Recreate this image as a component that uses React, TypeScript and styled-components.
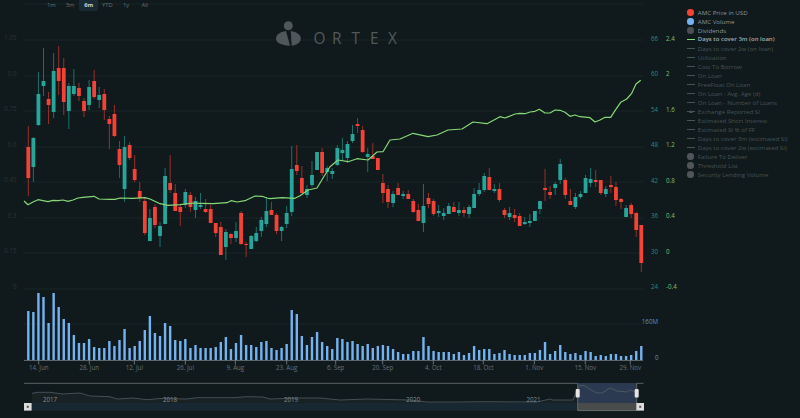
import styled, { createGlobalStyle } from 'styled-components'

const GlobalStyle = createGlobalStyle`
  html, body {
    margin: 0;
    padding: 0;
    background: #10191c;
    overflow: hidden;
  }
`

const Page = styled.div`
  display: flex;
  width: 800px;
  height: 418px;
  background: #10191c;
  font-family: 'Open Sans', 'Liberation Sans', sans-serif;
  overflow: hidden;
`

const ChartArea = styled.div`
  position: relative;
  flex: 0 0 686px;
  height: 418px;
`

const Chart = styled.svg`
  display: block;
  width: 686px;
  height: 418px;
  font-family: 'Open Sans', 'Liberation Sans', sans-serif;
`

// zoom buttons float over the top of the chart
const RangeBar = styled.div`
  position: absolute;
  top: 0;
  left: 42px;
  display: flex;
`

const RangeButton = styled.div<{ $active?: boolean }>`
  width: 18.7px;
  height: 11px;
  line-height: 11px;
  text-align: center;
  font-size: 5.8px;
  font-weight: ${p => (p.$active ? 700 : 400)};
  color: ${p => (p.$active ? '#c9d2d4' : '#667377')};
  background: ${p => (p.$active ? '#1a2a35' : 'transparent')};
  border-radius: 0 0 2px 2px;
`

const Legend = styled.div`
  display: flex;
  flex-direction: column;
  padding-top: 8px;
`

const LegendRow = styled.div`
  display: flex;
  align-items: center;
  height: 9.03px;
  gap: 2.4px;
`

const MarkerSlot = styled.div`
  position: relative;
  flex: 0 0 9.4px;
  height: 9px;
  display: flex;
  align-items: center;
  justify-content: center;
`

const Dot = styled.span<{ $color: string }>`
  width: 6.6px;
  height: 6.6px;
  border-radius: 50%;
  background: ${p => p.$color};
`

const Dash = styled.span<{ $color: string }>`
  width: 8.4px;
  height: 1.3px;
  background: ${p => p.$color};
`

const Triangle = styled.span`
  position: absolute;
  left: 2.6px;
  top: 2.6px;
  width: 0;
  height: 0;
  border-left: 2px solid transparent;
  border-right: 2px solid transparent;
  border-bottom: 3.4px solid #465355;
`

const LegendLabel = styled.span<{ $tone: 'on' | 'bold' | 'off' }>`
  font-size: ${p => (p.$tone === 'bold' ? '6px' : '6.15px')};
  line-height: 9px;
  white-space: nowrap;
  font-weight: ${p => (p.$tone === 'bold' ? 600 : 400)};
  color: ${p => (p.$tone === 'off' ? '#465355' : p.$tone === 'bold' ? '#a3aeaf' : '#8b9799')};
`

const GridLine = styled.line`
  stroke: #1a282b;
  stroke-width: 0.8;
`

const AxisLine = styled.line`
  stroke: #7b8790;
  stroke-width: 0.8;
`

const Wick = styled.line<{ $up: boolean }>`
  stroke: ${p => (p.$up ? '#1c7d76' : '#a8332c')};
  stroke-width: 0.9;
`

const Body = styled.rect<{ $up: boolean }>`
  fill: ${p => (p.$up ? '#26a69a' : '#f44336')};
`

const VolumeBar = styled.rect`
  fill: #74b3f0;
`

const DtcLine = styled.polyline`
  fill: none;
  stroke: #86d977;
  stroke-width: 1.2;
  stroke-linejoin: round;
`

const AxisText = styled.text<{ $color: string }>`
  font-size: 6.2px;
  fill: ${p => p.$color};
  dominant-baseline: central;
`

const LogoText = styled.text`
  font-family: 'Open Sans', 'Liberation Sans', sans-serif;
  font-size: 15.4px;
  font-weight: 400;
  fill: #51595c;
`

// [wick top, body top, body bottom, wick bottom], 1 = green candle
type Candle = [number, number, number, number, 0 | 1]
const candles: Candle[] = [
  [126,147,178,196,0],[137,138,167,182,1],[72,94,125,126,1],[48,81,86,96,1],[92,99,105,124,0],[53,71,112,118,1],
  [46,68,81,95,0],[58,68,102,115,0],[83,86,111,129,1],[69,86,94,96,1],[83,88,96,101,0],[98,101,111,117,0],
  [80,87,105,110,1],[70,81,97,99,0],[87,95,100,108,1],[89,94,110,120,0],[116,119,124,149,0],[105,114,136,137,0],
  [141,149,165,178,0],[136,147,189,202,1],[142,145,158,160,0],[155,169,180,182,0],[182,191,198,202,0],[198,201,233,235,0],
  [209,218,241,241,1],[204,207,225,228,0],[222,226,236,247,1],[168,176,224,224,1],[155,183,190,193,0],[184,193,211,211,0],
  [204,207,212,226,0],[189,192,205,208,1],[192,195,207,212,0],[197,201,210,218,1],[193,205,207,209,1],[199,209,212,213,0],
  [205,209,223,223,0],[223,223,233,237,0],[222,227,255,255,0],[229,232,247,260,1],[233,234,238,244,0],[222,231,238,242,1],
  [211,213,244,245,0],[242,244,245,257,0],[235,236,249,249,1],[227,233,241,242,1],[217,220,231,237,1],[197,211,224,227,1],
  [202,210,215,215,0],[213,215,231,234,0],[226,227,231,241,1],[206,213,224,228,1],[146,169,212,216,1],[145,165,171,175,0],
  [166,178,193,193,0],[185,189,195,198,1],[161,175,185,187,1],[152,152,170,170,1],[148,152,173,176,0],[166,168,172,181,1],
  [168,171,174,179,1],[145,148,165,166,1],[138,150,153,161,1],[141,144,158,163,1],[125,134,141,143,1],[118,124,126,133,0],
  [126,130,152,153,0],[148,154,157,172,1],[143,156,159,159,0],[158,158,170,170,0],[174,183,193,203,0],[185,189,202,208,0],
  [191,194,203,207,1],[183,188,195,195,0],[191,194,196,199,1],[190,194,199,199,0],[199,201,212,213,0],[204,210,221,221,0],
  [184,206,223,232,1],[193,198,204,208,0],[199,201,214,216,0],[205,211,213,217,1],[208,213,216,220,1],[203,206,214,214,1],
  [202,207,212,212,0],[202,210,213,216,1],[207,210,213,217,0],[205,207,214,218,1],[188,194,208,208,1],[183,190,194,196,1],
  [173,176,190,192,1],[168,177,190,190,0],[184,189,191,193,1],[183,189,200,202,0],[208,210,215,218,0],[207,213,217,220,1],
  [209,215,218,222,0],[213,216,226,226,0],[217,222,224,225,1],[214,221,223,227,1],[211,211,221,221,1],[201,201,209,214,1],
  [169,188,190,201,0],[186,192,195,199,0],[182,184,188,195,1],[159,164,180,184,1],[178,180,195,199,0],[189,201,205,205,0],
  [193,197,207,209,1],[191,194,197,199,1],[175,178,193,193,1],[168,179,183,187,1],[170,180,182,187,0],[180,180,193,195,0],
  [186,189,194,197,1],[176,185,187,193,0],[182,187,200,206,0],[198,199,202,209,0],[205,208,217,217,1],[203,205,214,218,0],
  [212,213,230,237,0],[225,225,263,272,0],
]

const volumes = [
  311,312,293,297,323,293,307,319,323,335,343,343,339,347,348,348,341,346,340,329,348,346,341,330,316,333,336,323,326,340,
  341,339,348,345,348,348,348,347,342,337,349,343,335,345,345,347,342,341,348,350,348,344,310,314,336,345,337,332,342,346,
  349,338,339,342,341,344,346,344,348,346,345,346,349,352,354,354,351,351,337,346,351,352,352,352,354,352,355,353,346,350,
  349,349,354,353,350,354,355,355,355,353,353,350,342,354,351,345,352,354,353,355,351,352,356,355,356,354,354,356,356,355,
  351,346,
]

const dtc = [
  [24,201],[28,204.7],[33,202],[38,199.7],[43,200.7],[48,201.7],[53,200.3],[58,200.7],[63,200],[68,201.3],[73,200],[78,198],
  [83,197.3],[94,196.3],[99,199],[110,199.3],[115,199.3],[120,198],[133,198.3],[145,197.7],[150,199],[160,203.7],[168,205.3],
  [180,204.7],[193,203],[200,203.3],[213,203.7],[227,202.7],[231,200.7],[237,202],[245,200.7],[255,196],[262,196.3],[267,198],
  [270,198.7],[282,197.7],[295,198.3],[300,195.7],[308,190],[317,188],[323,178],[330,166.7],[338,160],[348,161.7],[357,158.7],
  [368,160],[377,152],[383,151.7],[390,140],[400,139],[413,133.3],[428,136.7],[437,135],[448,130],[462,129],[473,122],
  [487,123.7],[500,116.7],[505,118],[515,114],[520,113.3],[525,113.7],[530,112],[535,111.3],[539.3,109.3],[545,113],[550,113],
  [555,110],[560,110.3],[565,112.3],[570,116.3],[575,115],[580,116.7],[590,117.7],[595,122],[600,120],[605,117.3],[610.7,117.3],
  [615,110.7],[620.7,102.3],[626.7,99],[631.7,93.3],[636,84],[640.7,80.3],
]

const navigator = [
  [32,393.3],[38,392.3],[50,392.3],[63,394],[80,393],[90,396],[110,396.7],[117,399],[133,398],[147,399.7],[160,398.5],[187,399],
  [197,397.7],[233,397.7],[247,396.7],[263,397],[270,399],[297,398],[320,398],[340,400],[367,399],[410,400],[427,402],[453,402],
  [483,401.7],[537,402],[550,399],[553,400],[573,400],[577,390],[580,385],[585,386],[591,390],[597,393],[602,393],[610,388],
  [617,391],[627,392],[630,390],[633,391],[637,392],
]

const grid = [4, 40, 76, 111, 147, 182, 218, 253, 289, 324]
const leftAxis = [['1.05', 37], ['0.9', 73], ['0.75', 108], ['0.6', 144], ['0.45', 179], ['0.3', 215], ['0.15', 250], ['0', 286]] as const
const rightAxis = [['66', '2.4', 38], ['60', '2', 73], ['54', '1.6', 109], ['48', '1.2', 144], ['42', '0.8', 180], ['36', '0.4', 215], ['30', '0', 251], ['24', '-0.4', 286]] as const
const dates = [['14. Jun', 38.7], ['28. Jun', 89.3], ['12. Jul', 134.3], ['26. Jul', 185.3], ['9. Aug', 235.3], ['23. Aug', 286.7], ['6. Sep', 335.7], ['20. Sep', 382.7], ['4. Oct', 433.3], ['18. Oct', 483.3], ['1. Nov', 534.3], ['15. Nov', 585.3], ['29. Nov', 630.3]] as const
const years = [['2017', 50], ['2018', 170], ['2019', 291], ['2020', 413.3], ['2021', 533.5]] as const

type Marker = 'dot' | 'dash' | 'tri'
const legend: { label: string; marker: Marker; color: string; tone: 'on' | 'bold' | 'off' }[] = [
  { label: 'AMC Price in USD', marker: 'dot', color: '#f44336', tone: 'on' },
  { label: 'AMC Volume', marker: 'dot', color: '#74b3f0', tone: 'on' },
  { label: 'Dividends', marker: 'dot', color: '#4a4f52', tone: 'on' },
  { label: 'Days to cover 3m (on loan)', marker: 'dash', color: '#86d977', tone: 'bold' },
  { label: 'Days to cover 2w (on loan)', marker: 'dash', color: '#465355', tone: 'off' },
  { label: 'Utilization', marker: 'dash', color: '#465355', tone: 'off' },
  { label: 'Cost To Borrow', marker: 'dash', color: '#465355', tone: 'off' },
  { label: 'On Loan', marker: 'dash', color: '#465355', tone: 'off' },
  { label: 'FreeFloat On Loan', marker: 'dash', color: '#465355', tone: 'off' },
  { label: 'On Loan - Avg. Age (d)', marker: 'dash', color: '#465355', tone: 'off' },
  { label: 'On Loan - Number of Loans', marker: 'dash', color: '#465355', tone: 'off' },
  { label: 'Exchange Reported SI', marker: 'tri', color: '#465355', tone: 'off' },
  { label: 'Estimated Short Interest', marker: 'dash', color: '#465355', tone: 'off' },
  { label: 'Estimated SI % of FF', marker: 'dash', color: '#465355', tone: 'off' },
  { label: 'Days to cover 3m (estimated SI)', marker: 'dash', color: '#465355', tone: 'off' },
  { label: 'Days to cover 2w (estimated SI)', marker: 'dash', color: '#465355', tone: 'off' },
  { label: 'Failure To Deliver', marker: 'dot', color: '#4f5558', tone: 'off' },
  { label: 'Threshold List', marker: 'dot', color: '#4f5558', tone: 'off' },
  { label: 'Security Lending Volume', marker: 'dot', color: '#4f5558', tone: 'off' },
]

const barX = (i: number) => 28.3 + 5.066 * i
const toPoints = (pts: number[][]) => pts.map(p => p.join(',')).join(' ')

const App = () => (
  <Page>
    <GlobalStyle />
    <ChartArea>
      <Chart viewBox="0 0 686 418">
        {/* grid */}
        {grid.map(y => <GridLine key={y} x1={24} x2={643} y1={y} y2={y} />)}

        {/* logo */}
        <g fill="#4f575a">
          <circle cx={288.3} cy={25.7} r={4.5} />
          <path d="M286 31 C280 32 276 34.8 276 38.4 C276 42 279.6 44.8 290 45.7 Z" />
          <path d="M290.7 31 C296.8 32 300.8 34.8 300.8 38.4 C300.8 42.2 297 44.9 291.7 45.7 Z" />
        </g>
        <LogoText x="313.5 332 351.5 370 388" y={44}>ORTEX</LogoText>

        {/* price axis */}
        {leftAxis.map(([t, y]) => (
          <AxisText key={t} $color="#2c3436" x={16.5} y={y} textAnchor="end">{t}</AxisText>
        ))}
        {rightAxis.map(([a, b, y]) => (
          <g key={a}>
            <AxisText $color="#2a8a84" x={651} y={y}>{a}</AxisText>
            <AxisText $color="#7fc070" x={666} y={y}>{b}</AxisText>
          </g>
        ))}
        <AxisText $color="#5f93c4" x={658} y={321} textAnchor="end">160M</AxisText>
        <AxisText $color="#5f93c4" x={658.5} y={357} textAnchor="end">0</AxisText>

        {/* candles */}
        {candles.map(([wt, bt, bb, wb, up], i) => (
          <g key={i}>
            <Wick $up={!!up} x1={barX(i)} x2={barX(i)} y1={wt} y2={wb} />
            <Body $up={!!up} x={barX(i) - 1.9} y={bt} width={3.8} height={Math.max(bb - bt, 1)} />
          </g>
        ))}
        <DtcLine points={toPoints(dtc)} />

        {/* volume */}
        {volumes.map((top, i) => (
          <VolumeBar key={i} x={barX(i) - 1.2} y={top} width={2.4} height={360 - top} />
        ))}
        <AxisLine x1={24} x2={643} y1={360.4} y2={360.4} />
        {dates.map(([t, x]) => (
          <g key={t}>
            <AxisLine x1={x} x2={x} y1={360} y2={364.5} />
            <AxisText $color="#66737a" x={x} y={367.8} textAnchor="middle">{t}</AxisText>
          </g>
        ))}

        {/* navigator */}
        <polygon points={`32,403 ${toPoints(navigator)} 637,403`} fill="#182124" />
        <rect x={24} y={403} width={619} height={7.6} fill="#182833" />
        <rect x={577.7} y={383} width={59} height={27.6} fill="#2b3a50" />
        <polyline points={toPoints(navigator)} fill="none" stroke="#59666c" strokeWidth={0.7} />
        {years.map(([t, x]) => (
          <AxisText key={t} $color="#858d90" x={x} y={399.3} textAnchor="middle">{t}</AxisText>
        ))}
        <rect x={577.7} y={403} width={59} height={7.6} fill="#4a4b4b" />
        <polyline points="24,383.3 577.7,383.3 577.7,410.6 636.7,410.6 636.7,383.3 643.5,383.3" fill="none" stroke="#6d7375" strokeWidth={0.8} />
        <rect x={575.7} y={389} width={4} height={8.4} rx={1} fill="#e4e4e4" />
        <rect x={634.7} y={389} width={4} height={8.4} rx={1} fill="#e4e4e4" />
        <rect x={24} y={403} width={7.6} height={7.6} fill="#dcdcdc" />
        <rect x={26.8} y={405.8} width={2} height={2} fill="#555" />
        <rect x={636.4} y={403} width={7.6} height={7.6} fill="#dcdcdc" />
        <rect x={639.2} y={405.8} width={2} height={2} fill="#555" />
      </Chart>

      <RangeBar>
        {['1m', '3m', '6m', 'YTD', '1y', 'All'].map(r => (
          <RangeButton key={r} $active={r === '6m'}>{r}</RangeButton>
        ))}
      </RangeBar>
    </ChartArea>

    <Legend>
      {legend.map(item => (
        <LegendRow key={item.label}>
          <MarkerSlot>
            {item.marker === 'dot' ? <Dot $color={item.color} /> : <Dash $color={item.color} />}
            {item.marker === 'tri' && <Triangle />}
          </MarkerSlot>
          <LegendLabel $tone={item.tone}>{item.label}</LegendLabel>
        </LegendRow>
      ))}
    </Legend>
  </Page>
)

export default App
